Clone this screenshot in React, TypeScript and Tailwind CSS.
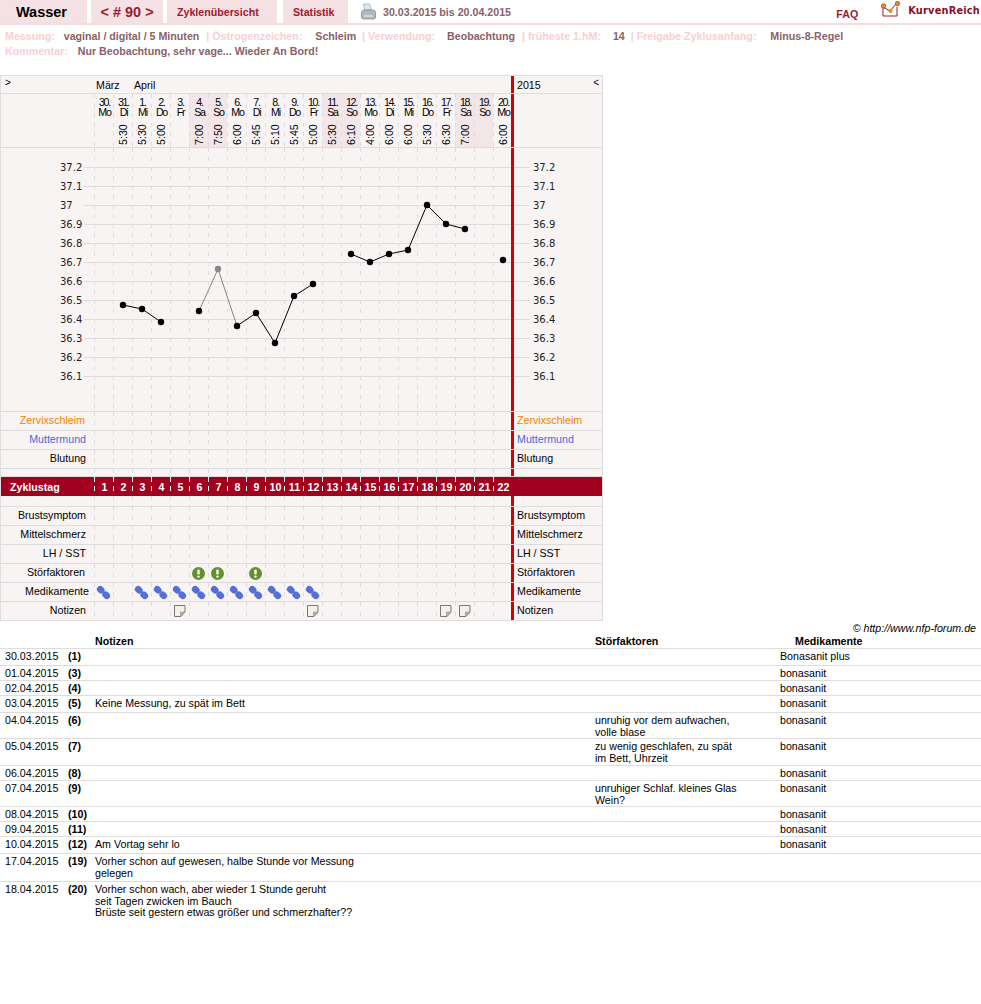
const sans = "font-['Liberation_Sans',Arial,sans-serif]"
const dash = "bg-[repeating-linear-gradient(to_bottom,#dedcdc_0_4px,transparent_4px_9.5px)] bg-[length:1px_100%] bg-no-repeat"
const dashWhite = "bg-[repeating-linear-gradient(to_bottom,#fff_0_5px,transparent_5px_9.5px)] bg-[length:1px_100%] bg-no-repeat"
const redBar = "relative -ml-px h-full w-[3px] shrink-0 bg-[#d60000]"

const dayHeads = [
  ["30.", "Mo", "", false], ["31.", "Di", "5:30", false], ["1.", "Mi", "5:30", false], ["2.", "Do", "5:00", false],
  ["3.", "Fr", "", false], ["4.", "Sa", "7:00", true], ["5.", "So", "7:50", true], ["6.", "Mo", "6:00", false],
  ["7.", "Di", "5:45", false], ["8.", "Mi", "5:10", false], ["9.", "Do", "5:45", false], ["10.", "Fr", "5:00", false],
  ["11.", "Sa", "5:30", true], ["12.", "So", "6:10", true], ["13.", "Mo", "4:00", false], ["14.", "Di", "6:00", false],
  ["15.", "Mi", "6:00", false], ["16.", "Do", "5:30", false], ["17.", "Fr", "6:30", false], ["18.", "Sa", "7:00", true],
  ["19.", "So", "", true], ["20.", "Mo", "6:00", false],
] as const

const days = Array.from({ length: 22 }, (_, i) => i)
const scale = ["37.2", "37.1", "37", "36.9", "36.8", "36.7", "36.6", "36.5", "36.4", "36.3", "36.2", "36.1"]

// day index, y of the dot in the curve box
const curveA = [[1, 157], [2, 161], [3, 174]]
const curveB = [[5, 163], [6, 121], [7, 178], [8, 165], [9, 195], [10, 148], [11, 136]]
const curveC = [[13, 106], [14, 114], [15, 106], [16, 102], [17, 57], [18, 76], [19, 81]]

function dayX(d: number) {
  return d * 19 + 10
}

function Cell({ children }: { children?: React.ReactNode }) {
  return <div className={`${dash} flex h-full w-[19px] shrink-0 items-center justify-center`}>{children}</div>
}

function Pill() {
  return (
    <svg width="13" height="13" viewBox="0 0 13 13" className="overflow-visible">
      <g transform="rotate(45 6.5 6.5)" fill="#5470d6">
        <rect x="-1.500" y="3.250" width="8.200" height="6.500" rx="3.200" />
        <rect x="6.300" y="3.250" width="8.200" height="6.500" rx="3.200" />
      </g>
    </svg>
  )
}

function Warn() {
  return (
    <svg width="13" height="13" viewBox="0 0 13 13">
      <circle cx="6.5" cy="6.5" r="6.5" fill="#63912f" />
      <rect x="5.3" y="2.5" width="2.4" height="5" rx="1" fill="#fff" />
      <circle cx="6.5" cy="9.6" r="1.2" fill="#fff" />
    </svg>
  )
}

function Note() {
  return (
    <svg width="12" height="12" viewBox="0 0 12 12">
      <path d="M.5.5h10.500v6.500l-4 4.500h-6.500z" fill="#f5f1ea" stroke="#777" />
      <path d="M6.500 11V7H11z" fill="#bbb" stroke="#888" strokeWidth=".6" />
    </svg>
  )
}

function Row({
  label,
  color = "text-black",
  height = "h-[19px]",
  labelWidth = "w-[85px]",
  icons = {},
}: {
  label?: string
  color?: string
  height?: string
  labelWidth?: string
  icons?: Record<number, React.ReactNode>
}) {
  return (
    <div className={`flex ${height} border-b border-[#dedcdc] text-[10.67px]`}>
      <div className="w-[93px] shrink-0">
        <div className={`${labelWidth} whitespace-nowrap text-right leading-[17px] ${color}`}>{label}</div>
      </div>
      {days.map((d) => (
        <Cell key={d}>{icons[d]}</Cell>
      ))}
      <div className={redBar} />
      <div className={`flex-1 pl-[3px] leading-[17px] ${color}`}>{label}</div>
    </div>
  )
}

function iconsFor(list: number[], node: React.ReactNode) {
  const out: Record<number, React.ReactNode> = {}
  list.forEach((d) => (out[d] = node))
  return out
}

function Curve({ pts, color = "#000" }: { pts: number[][]; color?: string }) {
  return (
    <polyline
      points={pts.map(([d, y]) => `${dayX(d)},${y}`).join(" ")}
      fill="none"
      stroke={color}
      strokeWidth="1"
    />
  )
}

function Dots({ pts }: { pts: number[][] }) {
  return (
    <>
      {pts.map(([d, y]) => (
        <circle key={d} cx={dayX(d)} cy={y} r="3.200" fill={d === 6 ? "#888" : "#000"} />
      ))}
    </>
  )
}

function Chart() {
  return (
    <div className="w-[603px] border-x border-t border-[#dedcdc] bg-[#f9f4f4]">
      <div className="flex h-[18px] border-b border-[#dedcdc] text-[10.67px] leading-[18px] text-black">
        <div className="w-[93px] shrink-0 pl-[4px] text-[10px] leading-[14px]">&gt;</div>
        <div className="w-[38px] shrink-0 pl-[2px]">März</div>
        <div className="w-[380px] shrink-0 pl-[2px]">April</div>
        <div className={redBar} />
        <div className="flex flex-1 justify-between px-[3px]">
          <span>2015</span>
          <span className="text-[10px] leading-[14px]">&lt;</span>
        </div>
      </div>

      <div className="flex h-[54px] border-b border-[#dedcdc]">
        <div className="w-[93px] shrink-0" />
        {dayHeads.map(([date, name, time, weekend]) => (
          <div
            key={date}
            className={`${dash} flex h-full w-[19px] shrink-0 flex-col items-center overflow-hidden pl-[2px] text-[10.67px] leading-[10px] tracking-[-1.2px] text-black ${weekend ? "bg-[#f3e6e8]" : ""}`}
          >
            <div className="pt-[3px]">{date}</div>
            <div>{name}</div>
            <div className="mt-[7px] h-[21px] rotate-180 leading-[11px] tracking-normal [writing-mode:vertical-rl]">
              {time}
            </div>
          </div>
        ))}
        <div className={redBar} />
        <div className="flex-1" />
      </div>

      <div className="flex h-[264px] border-b border-[#dedcdc]">
        <div className="relative w-[511px] shrink-0">
          <div className="flex h-full w-full pl-[93px]">
            {days.map((d) => (
              <Cell key={d} />
            ))}
          </div>
          <div className="absolute inset-0 flex flex-col pt-[10px]">
            {scale.map((s) => (
              <div key={s} className="flex h-[19px] shrink-0 items-center">
                <div className="w-[83px] shrink-0 pl-[59px] font-['DejaVu_Sans',sans-serif] text-[10px] text-[#222]">{s}</div>
                <div className="h-px flex-1 bg-[#dedcdc]" />
              </div>
            ))}
          </div>
          <svg width="418" height="263" viewBox="0 0 418 263" className="absolute left-[93px] top-0">
            <Curve pts={curveA} />
            <Curve pts={curveB.slice(0, 3)} color="#888" />
            <Curve pts={curveB.slice(2)} />
            <Curve pts={curveC} />
            <Dots pts={curveA} />
            <Dots pts={curveB} />
            <Dots pts={curveC} />
            <circle cx={dayX(21)} cy="112" r="3.200" fill="#000" />
          </svg>
        </div>
        <div className={redBar} />
        <div className="flex h-full flex-1 flex-col pt-[10px]">
          {scale.map((s) => (
            <div key={s} className="flex h-[19px] shrink-0 items-center">
              <div className="h-px w-[16px] shrink-0 bg-[#dedcdc]" />
              <div className="pl-[3px] font-['DejaVu_Sans',sans-serif] text-[10px] text-[#222]">{s}</div>
            </div>
          ))}
        </div>
      </div>

      <Row label="Zervixschleim" labelWidth="w-[84px]" color="text-[#f58000]" />
      <Row label="Muttermund" color="text-[#4a68d0]" />
      <Row label="Blutung" />
      <Row height="h-[8px]" />

      <div className="flex h-[19px] bg-[#a1001f] text-[10.67px] font-bold leading-[20px] text-white">
        <div className="w-[93px] shrink-0 pl-[9px]">Zyklustag</div>
        {days.map((d) => (
          <div key={d} className={`${dashWhite} h-full w-[19px] shrink-0 pl-[2px] text-center`}>
            {d + 1}
          </div>
        ))}
      </div>

      <Row height="h-[11px]" />
      <Row label="Brustsymptom" />
      <Row label="Mittelschmerz" />
      <Row label="LH / SST" />
      <Row label="Störfaktoren" labelWidth="w-[84px]" icons={iconsFor([5, 6, 8], <Warn />)} />
      <Row label="Medikamente" labelWidth="w-[88px]" icons={iconsFor([0, 2, 3, 4, 5, 6, 7, 8, 9, 10, 11], <Pill />)} />
      <Row label="Notizen" icons={iconsFor([4, 11, 18, 19], <Note />)} />
    </div>
  )
}

const rows = [
  ["30.03.2015", "(1)", "", "", "Bonasanit plus", "h-[17px] border-b"],
  ["01.04.2015", "(3)", "", "", "bonasanit", "h-[15px] border-b"],
  ["02.04.2015", "(4)", "", "", "bonasanit", "h-[15px] border-b"],
  ["03.04.2015", "(5)", "Keine Messung, zu spät im Bett", "", "bonasanit", "h-[17px] border-b"],
  ["04.04.2015", "(6)", "", "unruhig vor dem aufwachen,\nvolle blase", "bonasanit", "h-[26px] border-b"],
  ["05.04.2015", "(7)", "", "zu wenig geschlafen, zu spät\nim Bett, Uhrzeit", "bonasanit", "h-[27px] border-b"],
  ["06.04.2015", "(8)", "", "", "bonasanit", "h-[15px] border-b"],
  ["07.04.2015", "(9)", "", "unruhiger Schlaf. kleines Glas\nWein?", "bonasanit", "h-[26px] border-b"],
  ["08.04.2015", "(10)", "", "", "bonasanit", "h-[15px] border-b"],
  ["09.04.2015", "(11)", "", "", "bonasanit", "h-[15px] border-b"],
  ["10.04.2015", "(12)", "Am Vortag sehr lo", "", "bonasanit", "h-[17px] border-b"],
  ["17.04.2015", "(19)", "Vorher schon auf gewesen, halbe Stunde vor Messung\ngelegen", "", "", "h-[28px] border-b"],
  ["18.04.2015", "(20)", "Vorher schon wach, aber wieder 1 Stunde geruht\nseit Tagen zwicken im Bauch\nBrüste seit gestern etwas größer und schmerzhafter??", "", "", "h-[40px]"],
]

export default function App() {
  return (
    <div className={`${sans} min-h-[1004px] w-[981px] overflow-hidden bg-white`}>
      <div className="flex h-[25px] items-start border-b-2 border-[#f3dfe1]">
        <div className="flex h-[23px] w-[87px] items-center justify-center bg-[#f3e1e3] pr-[4px] pt-[3px] text-[14.5px] font-bold text-black">Wasser</div>
        <div className="ml-[4px] flex h-[23px] w-[72px] items-center justify-center bg-[#f3e1e3] pt-[3px] text-[14.5px] font-bold text-[#a1182f]">&lt; # 90 &gt;</div>
        <div className="ml-[4px] flex h-[23px] w-[110px] items-center bg-[#f3e1e3] pl-[10px] text-[10.67px] font-bold text-[#a1182f]">Zyklenübersicht</div>
        <div className="ml-[6px] flex h-[23px] w-[65px] items-center bg-[#f3e1e3] pl-[10px] text-[10.67px] font-bold text-[#a1182f]">Statistik</div>
        <svg width="15" height="17" viewBox="0 0 15 17" className="ml-[13px] mt-[3px]">
          <path d="M2.500 1h6l2 6h-7z" fill="#dce6f0" stroke="#a2acb8" strokeWidth=".8" />
          <path d="M0.500 10q0-3 3-3h8q3 0 3 3v4q0 2-2 2h-10q-2 0-2-2z" fill="#b4b8bc" stroke="#868c92" strokeWidth=".8" />
          <path d="M3 13h9" stroke="#eceeef" />
        </svg>
        <div className="ml-[7px] h-[23px] text-[10.67px] font-bold leading-[24px] text-[#8a6168]">30.03.2015 bis 20.04.2015</div>
        <div className="ml-auto mr-[23px] mt-[8px] text-[10.67px] font-bold leading-[13px] text-[#a1182f]">FAQ</div>
        <svg width="20" height="17" viewBox="0 0 20 17" className="mr-[7px] mt-[1px]">
          <path d="M2 6v9h14V6" fill="none" stroke="#a1182f" />
          <path d="M2 6l7 4 7-8" fill="none" stroke="#a1182f" />
          <circle cx="2.500" cy="5" r="2.200" fill="#f08a1f" stroke="#a1182f" strokeWidth=".6" />
          <circle cx="9.500" cy="10" r="2" fill="#f08a1f" />
          <circle cx="16.500" cy="2.500" r="2.200" fill="#f08a1f" stroke="#a1182f" strokeWidth=".6" />
        </svg>
        <div className="mr-[1px] mt-[4px] font-['DejaVu_Sans',sans-serif] text-[9.8px] font-bold tracking-[0.2px] text-[#8b0f20]">KurvenReich</div>
      </div>

      <div className="h-[50px] px-[5px] pt-[4px] text-[10.67px] font-bold leading-[15px] text-[#8a6168]">
        <div className="whitespace-nowrap">
          <span className="text-[#f8d0d4]">Messung:</span>
          <span className="ml-[9px]">vaginal / digital / 5 Minuten</span>
          <span className="ml-[7px] text-[#f8d0d4]">| Östrogenzeichen:</span>
          <span className="ml-[13px]">Schleim</span>
          <span className="ml-[6px] text-[#f8d0d4]">| Verwendung:</span>
          <span className="ml-[12px]">Beobachtung</span>
          <span className="ml-[7px] text-[#f8d0d4]">| früheste 1.hM:</span>
          <span className="ml-[12px]">14</span>
          <span className="ml-[6px] text-[#f8d0d4]">| Freigabe Zyklusanfang:</span>
          <span className="ml-[14px]">Minus-8-Regel</span>
        </div>
        <div className="whitespace-nowrap">
          <span className="text-[#f8d0d4]">Kommentar:</span>
          <span className="ml-[10px]">Nur Beobachtung, sehr vage... Wieder An Bord!</span>
        </div>
      </div>

      <Chart />

      <div className="h-[14px] pr-[5px] text-right text-[10.67px] italic leading-[14px] text-black">© http://www.nfp-forum.de</div>

      <div className="text-[10.67px] leading-[11.500px] text-black">
        <div className="flex h-[14px] border-b border-[#dedcdc] font-bold leading-[12px]">
          <div className="w-[95px] shrink-0" />
          <div className="w-[500px] shrink-0">Notizen</div>
          <div className="w-[200px] shrink-0">Störfaktoren</div>
          <div>Medikamente</div>
        </div>
        {rows.map(([date, day, note, factor, med, height]) => (
          <div key={date} className={`flex ${height} border-[#dedcdc] pt-[2px]`}>
            <div className="w-[68px] shrink-0 pl-[5px]">{date}</div>
            <div className="w-[27px] shrink-0 font-bold">{day}</div>
            <div className="w-[500px] shrink-0 whitespace-pre-line">{note}</div>
            <div className="w-[185px] shrink-0 whitespace-pre-line">{factor}</div>
            <div>{med}</div>
          </div>
        ))}
      </div>
    </div>
  )
}
